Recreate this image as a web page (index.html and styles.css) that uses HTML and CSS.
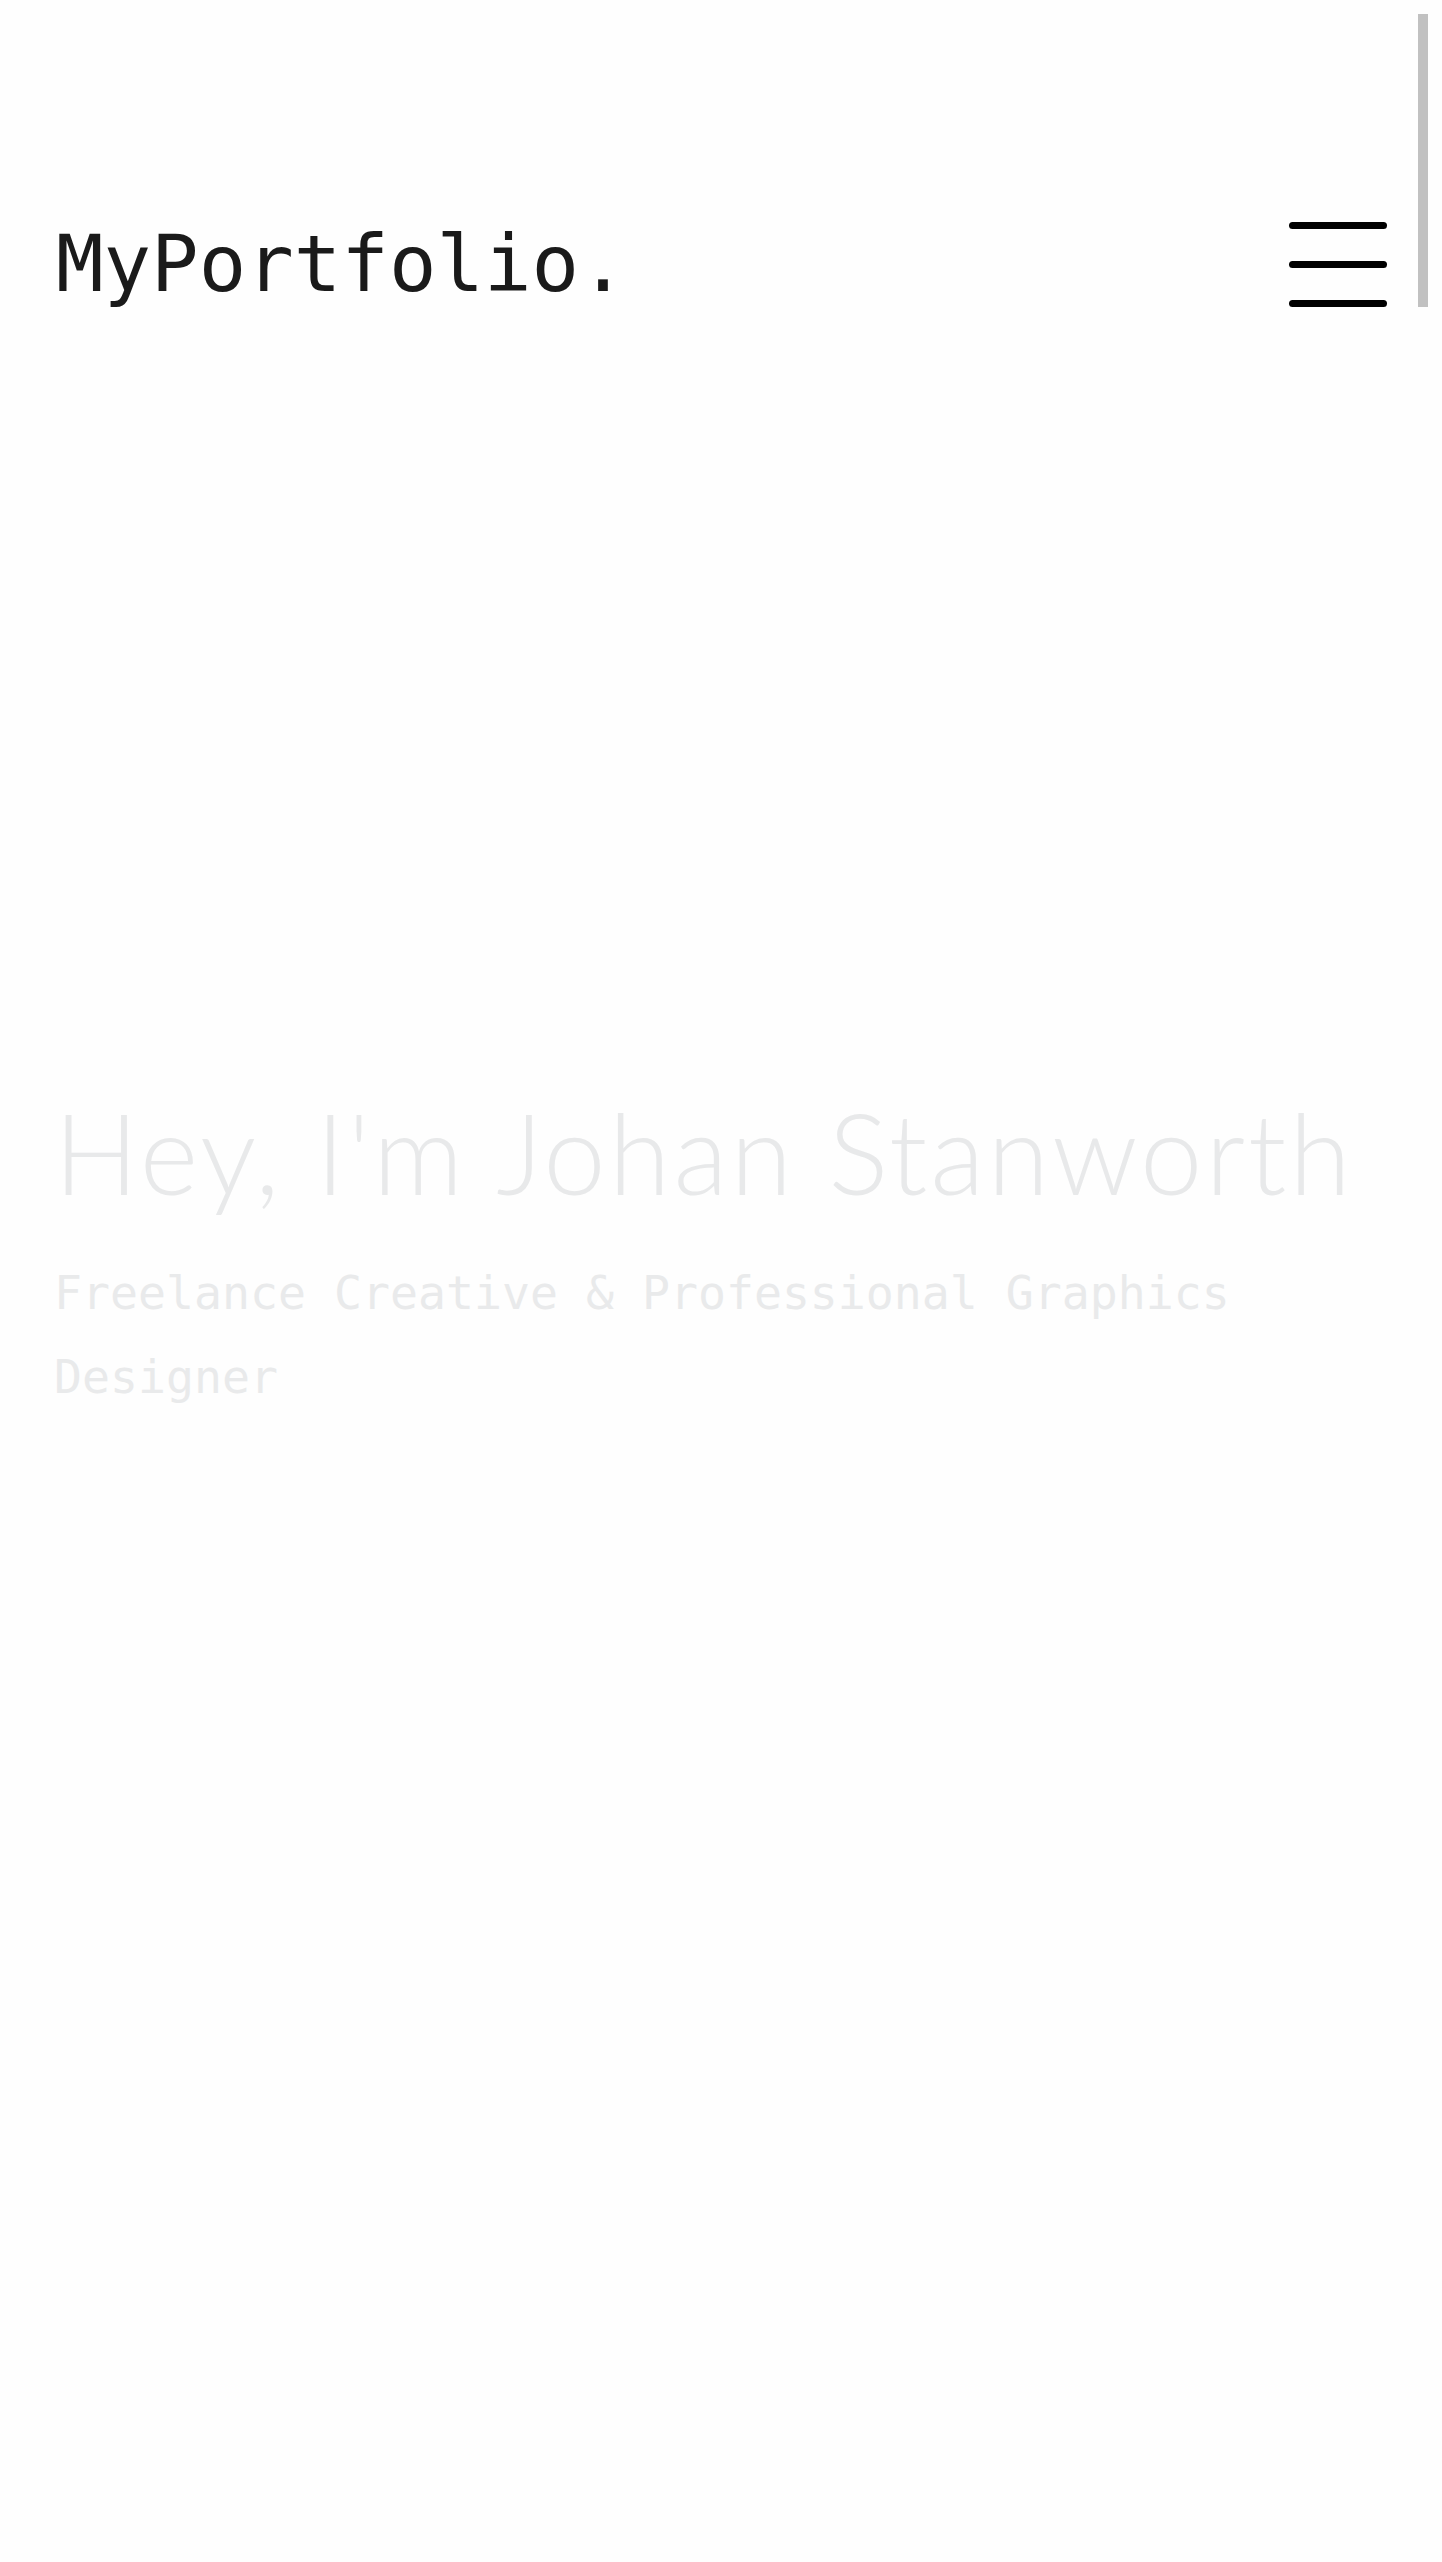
FILE: index.html
```html
<!DOCTYPE html>
<html lang="en">
<head>
<meta charset="utf-8">
<title>MyPortfolio.</title>
<link rel="stylesheet" href="styles.css">
</head>
<body>
<header class="site-header">
  <a class="logo" href="#">MyPortfolio.</a>
  <button class="menu-toggle" aria-label="Menu">
    <span class="bar"></span>
    <span class="bar"></span>
    <span class="bar"></span>
  </button>
</header>
<main class="hero">
  <h1 class="hero-title">Hey, I'm Johan Stanworth</h1>
  <p class="hero-sub">Freelance Creative &amp; Professional Graphics Designer</p>
</main>
<div class="scroll-thumb"></div>
</body>
</html>
```
FILE: styles.css
```css
html, body {
  margin: 0;
  padding: 0;
  background: #fefefe;
}
body {
  min-height: 2562px;
}
.site-header {
  display: flex;
  justify-content: space-between;
  align-items: center;
  padding: 222px 55px 0 56px;
}
.logo {
  font-family: "DejaVu Sans Mono", monospace;
  font-size: 79px;
  line-height: 1;
  color: #1a1a1a;
  text-decoration: none;
}
.menu-toggle {
  display: flex;
  flex-direction: column;
  gap: 32px;
  width: 98px;
  padding: 0;
  border: 0;
  background: transparent;
}
.bar {
  display: block;
  height: 7px;
  width: 98px;
  border-radius: 4px;
  background: #000;
}
.hero {
  padding: 0 54px;
  margin-top: 789px;
}
.hero-title {
  margin: 0;
  font-family: Lato, "Open Sans", sans-serif;
  font-weight: 300;
  font-size: 112px;
  line-height: 1;
  letter-spacing: 3px;
  color: #e8e9ea;
}
.hero-sub {
  margin: 43px 0 0;
  font-family: "DejaVu Sans Mono", monospace;
  font-size: 46.5px;
  line-height: 84px;
  color: #e9eaeb;
  max-width: 1330px;
}
.scroll-thumb {
  position: fixed;
  top: 14px;
  right: 14px;
  width: 10px;
  height: 293px;
  background: #c1c1c1;
}
```
